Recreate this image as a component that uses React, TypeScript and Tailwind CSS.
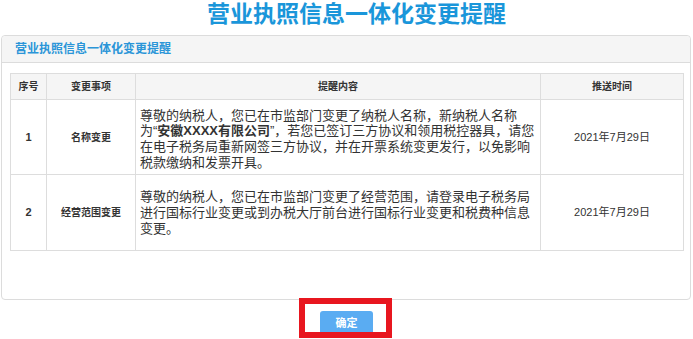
const FONT = { fontFamily: '"Liberation Sans", "Noto Sans CJK SC", sans-serif' };

const rows = [
  {
    no: "1",
    item: "名称变更",
    time: "2021年7月29日",
    h: "h-[75px]",
    pad: "pt-[4px]",
    content: (
      <>
        尊敬的纳税人，您已在市监部门变更了纳税人名称，新纳税人名称
        <br />
        为“<b>安徽XXXX有限公司</b>”，若您已签订三方协议和领用税控器具，请您
        <br />
        在电子税务局重新网签三方协议，并在开票系统变更发行，以免影响
        <br />
        税款缴纳和发票开具。
      </>
    ),
  },
  {
    no: "2",
    item: "经营范围变更",
    time: "2021年7月29日",
    h: "h-[76px]",
    pad: "pt-[1px]",
    content: (
      <>
        尊敬的纳税人，您已在市监部门变更了经营范围，请登录电子税务局
        <br />
        进行国标行业变更或到办税大厅前台进行国标行业变更和税费种信息
        <br />
        变更。
      </>
    ),
  },
];

export default function App() {
  return (
    <div className="w-[693px] h-[339px] bg-white text-[#333]" style={FONT}>
      <h1 className="h-[35px] pt-[1px] pl-[20px] text-center text-[23px] leading-[26px] font-bold text-[#1a96da]">
        营业执照信息一体化变更提醒
      </h1>

      <div className="ml-[1px] w-[690px] border border-[#dcdcdc] rounded-[4px] bg-white">
        <div className="h-[27px] px-[13px] flex items-center bg-[#f5f5f5] border-b border-[#dcdcdc] rounded-t-[4px]">
          <span className="text-[12px] font-bold text-[#2b95d8]">营业执照信息一体化变更提醒</span>
        </div>

        <div className="pt-[10px] pb-[48px] pl-[8px]">
          <table className="w-[673px] table-fixed border-collapse">
            <colgroup>
              <col className="w-[36px]" />
              <col className="w-[89px]" />
              <col className="w-[405px]" />
              <col className="w-[143px]" />
            </colgroup>
            <thead>
              <tr className="h-[26px] bg-[#f5f5f5] text-[10px] font-bold text-[#333]">
                <th className="border border-[#dddddd] text-center">序号</th>
                <th className="border border-[#dddddd] text-center">变更事项</th>
                <th className="border border-[#dddddd] text-center">提醒内容</th>
                <th className="border border-[#dddddd] text-center">推送时间</th>
              </tr>
            </thead>
            <tbody>
              {rows.map((r) => (
                <tr key={r.no} className={r.h}>
                  <td className="border border-[#dddddd] text-center text-[11px] font-bold">{r.no}</td>
                  <td className="border border-[#dddddd] text-center text-[10px] font-bold">{r.item}</td>
                  <td
                    className={`border border-[#dddddd] pl-[4px] pr-0 whitespace-nowrap text-[13px] leading-[15.7px] text-[#333] ${r.pad}`}
                  >
                    {r.content}
                  </td>
                  <td className="border border-[#dddddd] text-center text-[11px]">{r.time}</td>
                </tr>
              ))}
            </tbody>
          </table>
        </div>
      </div>

      <div className="flex justify-center mt-[10px]">
        <div className="relative">
          <button className="w-[53px] h-[24px] rounded-[3px] bg-[#5aacf2] text-white text-[11px] font-bold">
            确定
          </button>
          <div className="absolute -top-[12px] -bottom-[3px] -left-[21px] -right-[19px] border-[6px] border-[#e8161f] pointer-events-none" />
        </div>
      </div>
    </div>
  );
}
